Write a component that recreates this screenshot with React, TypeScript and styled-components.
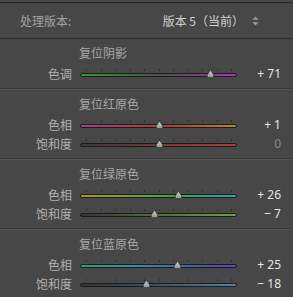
import React from "react";
import styled, { createGlobalStyle } from "styled-components";

const Global = createGlobalStyle`
  html, body { margin: 0; padding: 0; background: #474747; }
  body { font-family: "Noto Sans CJK SC", "Noto Sans", sans-serif; }
`;

const Panel = styled.div`
  width: 293px;
  height: 297px;
  background: #474747;
  padding-top: 2px;
  box-sizing: border-box;
  overflow: hidden;
`;

const Header = styled.div`
  height: 37px;
  border-top: 1px solid #262626;
  border-bottom: 1px solid #2a2a2a;
  box-sizing: border-box;
  display: flex;
  align-items: center;
  justify-content: space-between;
  padding: 0 34px 0 20px;
  font-size: 12px;
`;

const HeaderLabel = styled.span`
  color: #a2a2a2;
`;

const VersionBox = styled.div`
  display: flex;
  align-items: center;
  gap: 8px;
  color: #cfcfcf;
`;

const Section = styled.div<{ $last?: boolean }>`
  padding: 6px 0 5px;
  border-bottom: ${(p) => (p.$last ? "none" : "1px solid #383838")};
  box-shadow: ${(p) => (p.$last ? "none" : "0 1px 0 #525252")};
  margin-bottom: ${(p) => (p.$last ? "0" : "1px")};
`;

const Title = styled.div`
  height: 16px;
  line-height: 16px;
  font-size: 12px;
  color: #a8a8a8;
  padding-left: 79px;
  margin-bottom: 3px;
`;

const Row = styled.div`
  display: grid;
  grid-template-columns: 72px 157px 36px;
  column-gap: 8px;
  height: 19px;
  align-items: center;
`;

const Label = styled.span`
  text-align: right;
  font-size: 12px;
  color: #b0b0b0;
`;

const Value = styled.span<{ $dim?: boolean }>`
  text-align: right;
  font-family: "Noto Sans", "Noto Sans CJK SC", sans-serif;
  font-size: 12px;
  color: ${(p) => (p.$dim ? "#8a8a8a" : "#e6e6e6")};
`;

const TrackWrap = styled.div`
  position: relative;
  height: 19px;
`;

const Ticks = styled.div`
  position: absolute;
  left: 6px;
  right: 5px;
  top: 5px;
  height: 2px;
  display: flex;
  justify-content: space-between;
`;

const Tick = styled.span`
  width: 1px;
  height: 2px;
  background: #2e2e2e;
`;

const Track = styled.div<{ $bg: string }>`
  position: absolute;
  left: 0;
  right: 0;
  top: 9px;
  height: 4px;
  box-sizing: border-box;
  border: 1px solid #1c1c1c;
  border-radius: 2px;
  background: ${(p) => p.$bg};
`;

const Thumb = styled.svg`
  position: absolute;
  top: 6px;
  width: 9px;
  height: 8px;
  margin-left: -4.5px;
  overflow: visible;
`;

const gradients = {
  tone: "linear-gradient(90deg,#2c9e2c 0%,#3c7a3c 25%,#4a4f4a 50%,#6a4a6e 72%,#a63fae 100%)",
  redHue: "linear-gradient(90deg,#b03c86 0%,#b03a4e 35%,#b04038 60%,#b87030 85%,#b68a2c 100%)",
  redSat: "linear-gradient(90deg,#383838 0%,#6a3a3a 45%,#b03a3c 100%)",
  greenHue: "linear-gradient(90deg,#a09a30 0%,#7c9c38 30%,#4a9c4a 60%,#34a08a 85%,#2ca2a6 100%)",
  greenSat: "linear-gradient(90deg,#343434 0%,#4f6a3a 45%,#6aa440 100%)",
  blueHue: "linear-gradient(90deg,#2ca070 0%,#2c9a9a 30%,#3a70a8 60%,#5050b0 82%,#6a40b4 100%)",
  blueSat: "linear-gradient(90deg,#343434 0%,#3a5060 45%,#4a86aa 100%)",
};

function Slider({ value, bg }: { value: number; bg: string }) {
  const pct = (value + 100) / 200;
  const left = 6.5 + pct * 145.5;
  return (
    <TrackWrap>
      <Ticks>
        {Array.from({ length: 11 }).map((_, i) => (
          <Tick key={i} />
        ))}
      </Ticks>
      <Track $bg={bg} />
      <Thumb style={{ left }} viewBox="0 0 9 8">
        <defs>
          <linearGradient id="tg" x1="0" y1="0" x2="0" y2="1">
            <stop offset="0" stopColor="#d8d8d8" />
            <stop offset="1" stopColor="#8e8e8e" />
          </linearGradient>
        </defs>
        <path
          d="M4.5 0.3 L7.6 4.6 Q9 8 4.5 7.8 Q0 8 1.4 4.6 Z"
          fill="url(#tg)"
          stroke="#2a2a2a"
          strokeWidth="0.7"
        />
      </Thumb>
    </TrackWrap>
  );
}

function fmt(v: number) {
  if (v > 0) return `+ ${v}`;
  if (v < 0) return `− ${-v}`;
  return "0";
}

type R = { label: string; value: number; bg: string };

function SliderRow({ label, value, bg }: R) {
  return (
    <Row>
      <Label>{label}</Label>
      <Slider value={value} bg={bg} />
      <Value $dim={value === 0}>{fmt(value)}</Value>
    </Row>
  );
}

const sections: { title: string; rows: R[] }[] = [
  { title: "复位阴影", rows: [{ label: "色调", value: 71, bg: gradients.tone }] },
  {
    title: "复位红原色",
    rows: [
      { label: "色相", value: 1, bg: gradients.redHue },
      { label: "饱和度", value: 0, bg: gradients.redSat },
    ],
  },
  {
    title: "复位绿原色",
    rows: [
      { label: "色相", value: 26, bg: gradients.greenHue },
      { label: "饱和度", value: -7, bg: gradients.greenSat },
    ],
  },
  {
    title: "复位蓝原色",
    rows: [
      { label: "色相", value: 25, bg: gradients.blueHue },
      { label: "饱和度", value: -18, bg: gradients.blueSat },
    ],
  },
];

export default function App() {
  return (
    <>
      <Global />
      <Panel>
        <Header>
          <HeaderLabel>处理版本:</HeaderLabel>
          <VersionBox>
            <span>版本 5（当前）</span>
            <svg width="7" height="10" viewBox="0 0 7 10">
              <path d="M3.5 0.5 L6.5 3.8 L0.5 3.8 Z" fill="#9a9a9a" />
              <path d="M3.5 9.5 L6.5 6.2 L0.5 6.2 Z" fill="#9a9a9a" />
            </svg>
          </VersionBox>
        </Header>
        {sections.map((s, i) => (
          <Section key={s.title} $last={i === sections.length - 1}>
            <Title>{s.title}</Title>
            {s.rows.map((r) => (
              <SliderRow key={r.label} {...r} />
            ))}
          </Section>
        ))}
      </Panel>
    </>
  );
}
